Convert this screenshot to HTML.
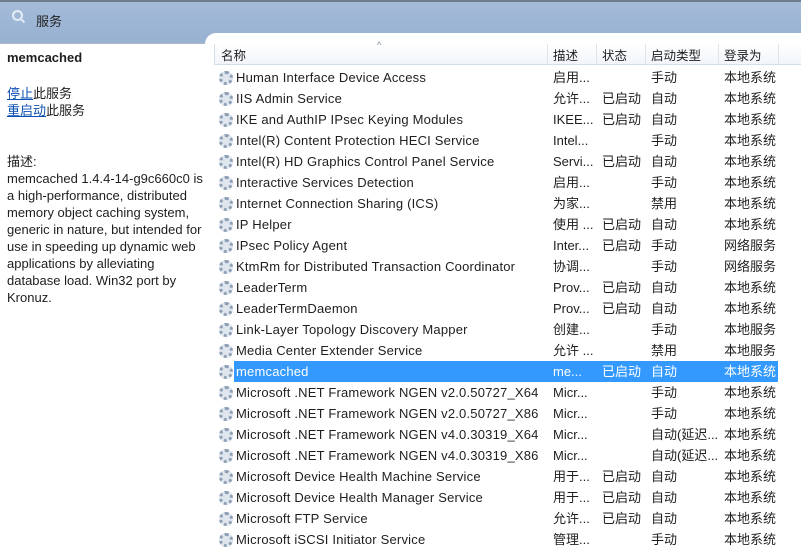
<!DOCTYPE html>
<html><head><meta charset="utf-8"><style>
*{margin:0;padding:0;box-sizing:border-box}
body{width:801px;height:551px;overflow:hidden;background:#fff;font-family:"Liberation Sans","Noto Sans CJK SC",sans-serif;font-size:13px;color:#1e1e1e;position:relative}
#top{position:absolute;left:0;top:0;width:801px;height:551px;background:linear-gradient(#a4bbd8,#96b0d1 45px,#96b0d1);border-top:2px solid #6f7c8c}
#title{position:absolute;left:36px;top:9px;font-size:13px;color:#222}
#mag{position:absolute;left:12px;top:8px;width:11px;height:11px;border:2px solid #e4ecf5;border-radius:50%}
#magh{position:absolute;left:21px;top:18px;width:4px;height:2px;background:#e4ecf5;transform:rotate(45deg)}
#left{position:absolute;left:0;top:43px;width:205px;height:508px;background:#fff;border-top:1px solid #aeb9c8}
#right{position:absolute;left:205px;top:33px;width:600px;height:520px;background:#fff;border-top-left-radius:11px}
.l{position:absolute;left:7px;line-height:17px}
a{color:#0b4fb3;text-decoration:underline}
#hdr{position:absolute;left:214px;top:44px;width:587px;height:21px;background:linear-gradient(#fff,#f1f5fa);border-bottom:1px solid #d5dfe9;border-left:1px solid #d5dfe9}
.h{position:absolute;top:1px;font-size:12.5px}
.sep{position:absolute;top:0;width:1px;height:20px;background:#dde4ec}
.row{position:absolute;left:214px;width:564px;height:21px;line-height:21px;white-space:nowrap}
.row span{position:absolute;top:0}
.nm{letter-spacing:0.2px}
.g{left:5px;top:4px!important;width:14px;height:14px;border-radius:50%;border:3px dotted #8d9fb5;background:#dfe6ee}
.sel{background:#3399ff;color:#fff}
.sel span{color:#fff}
</style></head><body>
<div id="top"><div id="mag"></div><div id="magh"></div><div id="title">服务</div></div>
<div id="left">
<div class="l" style="top:5px;font-weight:bold;font-size:13px">memcached</div>
<div class="l" style="top:41px"><a>停止</a>此服务</div>
<div class="l" style="top:58px"><a>重启动</a>此服务</div>
<div class="l" style="top:109px;width:196px">描述:<br>memcached 1.4.4-14-g9c660c0 is a high-performance, distributed memory object caching system, generic in nature, but intended for use in speeding up dynamic web applications by alleviating database load. Win32 port by Kronuz.</div>
</div>
<div id="right"></div>
<div id="hdr">
<span class="h" style="left:6px">名称</span><span style="position:absolute;left:162px;top:-4px;font-size:9px;color:#7a8899">^</span>
<div class="sep" style="left:332px"></div><span class="h" style="left:338px">描述</span>
<div class="sep" style="left:381px"></div><span class="h" style="left:387px">状态</span>
<div class="sep" style="left:430px"></div><span class="h" style="left:436px">启动类型</span>
<div class="sep" style="left:503px"></div><span class="h" style="left:509px">登录为</span>
<div class="sep" style="left:563px"></div>
</div>
<div id="rows"></div>
<script>
var d=[
["Human Interface Device Access","启用...","","手动","本地系统"],
["IIS Admin Service","允许...","已启动","自动","本地系统"],
["IKE and AuthIP IPsec Keying Modules","IKEE...","已启动","自动","本地系统"],
["Intel(R) Content Protection HECI Service","Intel...","","手动","本地系统"],
["Intel(R) HD Graphics Control Panel Service","Servi...","已启动","自动","本地系统"],
["Interactive Services Detection","启用...","","手动","本地系统"],
["Internet Connection Sharing (ICS)","为家...","","禁用","本地系统"],
["IP Helper","使用 ...","已启动","自动","本地系统"],
["IPsec Policy Agent","Inter...","已启动","手动","网络服务"],
["KtmRm for Distributed Transaction Coordinator","协调...","","手动","网络服务"],
["LeaderTerm","Prov...","已启动","自动","本地系统"],
["LeaderTermDaemon","Prov...","已启动","自动","本地系统"],
["Link-Layer Topology Discovery Mapper","创建...","","手动","本地服务"],
["Media Center Extender Service","允许 ...","","禁用","本地服务"],
["memcached","me...","已启动","自动","本地系统"],
["Microsoft .NET Framework NGEN v2.0.50727_X64","Micr...","","手动","本地系统"],
["Microsoft .NET Framework NGEN v2.0.50727_X86","Micr...","","手动","本地系统"],
["Microsoft .NET Framework NGEN v4.0.30319_X64","Micr...","","自动(延迟...","本地系统"],
["Microsoft .NET Framework NGEN v4.0.30319_X86","Micr...","","自动(延迟...","本地系统"],
["Microsoft Device Health Machine Service","用于...","已启动","自动","本地系统"],
["Microsoft Device Health Manager Service","用于...","已启动","自动","本地系统"],
["Microsoft FTP Service","允许...","已启动","自动","本地系统"],
["Microsoft iSCSI Initiator Service","管理...","","手动","本地系统"]];
var h="";d.forEach(function(r,i){h+='<div class="row'+(i==14?' sel':'')+'" style="top:'+(67+21*i)+'px'+(i==14?';left:234px;width:544px':'')+'">'+
'<span class="g" style="'+(i==14?'left:-15px':'')+'"></span>'+
'<span class="nm" style="left:'+(i==14?2:22)+'px">'+r[0]+'</span><span style="left:'+(i==14?319:339)+'px">'+r[1]+'</span><span style="left:'+(i==14?368:388)+'px">'+r[2]+'</span><span style="left:'+(i==14?417:437)+'px">'+r[3]+'</span><span style="left:'+(i==14?490:510)+'px">'+r[4]+'</span></div>'});
document.getElementById("rows").innerHTML=h;
</script>
</body></html>
